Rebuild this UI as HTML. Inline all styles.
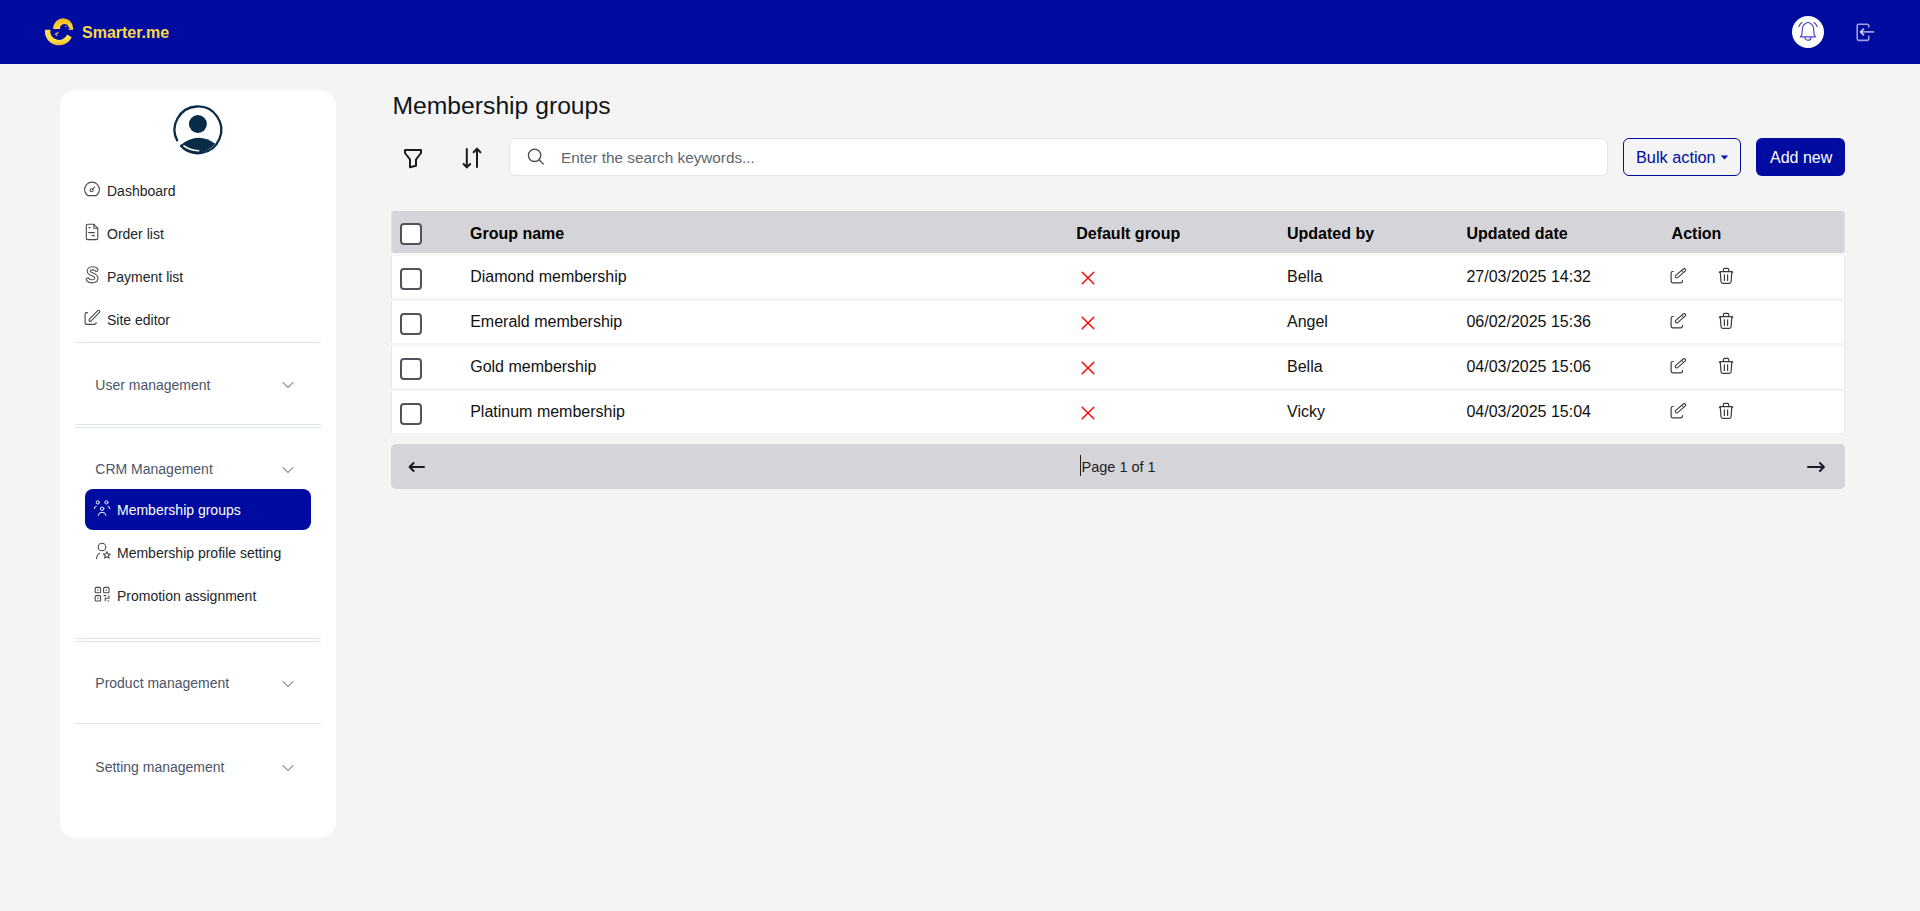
<!DOCTYPE html>
<html>
<head>
<meta charset="utf-8">
<style>
*{box-sizing:border-box;margin:0;padding:0}
html,body{width:1920px;height:911px;overflow:hidden;background:#f4f4f4;font-family:"Liberation Sans",sans-serif;color:#111}
.a{position:absolute}
.t{position:absolute;line-height:1;white-space:nowrap}
svg{position:absolute;overflow:visible}
#hdr{left:0;top:0;width:1920px;height:64px;background:#000c9f}
#side{left:60px;top:90px;width:276px;height:748px;background:#fff;border-radius:16px}
.s14{font-size:14px}
.s16{font-size:16px}
.nav{color:#212529}
.sec{color:#4a5568}
.hr{position:absolute;left:75px;width:246px;height:1px;background:#dde4ee}
.row{position:absolute;left:391px;width:1454px;height:42px;background:#fff;border-left:1px solid #e3e7ec;border-right:1px solid #e3e7ec}
.cb{position:absolute;left:400px;width:22px;height:22px;border:2.5px solid #505359;border-radius:4px;background:#fff}
.th{font-weight:bold;font-size:16px;color:#000}
.td{font-size:16px;color:#111}
</style>
</head>
<body>
<div id="hdr" class="a"></div>
<div id="side" class="a"></div>

<!-- header text -->
<div class="t" style="left:82px;top:24.5px;font-size:16px;font-weight:bold;color:#fcd947">Smarter.me</div>

<!-- sidebar -->
<div class="t s14 nav" style="left:107px;top:184px">Dashboard</div>
<div class="t s14 nav" style="left:107px;top:227px">Order list</div>
<div class="t s14 nav" style="left:107px;top:270px">Payment list</div>
<div class="t s14 nav" style="left:107px;top:312.8px">Site editor</div>
<div class="hr" style="top:342px"></div>
<div class="t s14 sec" style="left:95.3px;top:377.5px">User management</div>
<div class="hr" style="top:424px"></div>
<div class="hr" style="top:427px"></div>
<div class="t s14 sec" style="left:95.3px;top:462px">CRM Management</div>
<div class="a" style="left:85px;top:489px;width:226px;height:41px;background:#000c9f;border-radius:8px"></div>
<div class="t s14" style="left:117px;top:502.8px;color:#fff">Membership groups</div>
<div class="t s14 nav" style="left:117px;top:545.8px">Membership profile setting</div>
<div class="t s14 nav" style="left:117px;top:588.8px">Promotion assignment</div>
<div class="hr" style="top:638px"></div>
<div class="hr" style="top:641px"></div>
<div class="t s14 sec" style="left:95.3px;top:676px">Product management</div>
<div class="hr" style="top:723px"></div>
<div class="t s14 sec" style="left:95.3px;top:760px">Setting management</div>

<!-- main -->
<div class="t" style="left:392.5px;top:94.2px;font-size:24.7px;color:#111418">Membership groups</div>
<div class="a" style="left:509px;top:138px;width:1099px;height:38px;background:#fff;border:1px solid #dfe3ea;border-radius:6px"></div>
<div class="t" style="left:561px;top:150px;font-size:15.3px;color:#60666d">Enter the search keywords...</div>
<div class="a" style="left:1623px;top:138px;width:118px;height:38px;border:1px solid #000c9f;border-radius:6px"></div>
<div class="t s16" style="left:1636px;top:149.3px;font-size:16.3px;color:#000c9f">Bulk action</div>
<div class="a" style="left:1756px;top:138px;width:89px;height:38px;background:#000c9f;border-radius:6px"></div>
<div class="t s16" style="left:1770px;top:149.5px;color:#fff">Add new</div>

<!-- table header -->
<div class="a" style="left:391px;top:210.5px;width:1454px;height:42.5px;background:#d5d4d9;border-left:1px solid #dde2e8;border-right:1px solid #dde2e8;border-radius:3px"></div>
<div class="a" style="left:391px;top:253px;width:1454px;height:3px;background:#f7f7f7"></div>
<div class="cb" style="top:223px"></div>
<div class="t th" style="left:470px;top:225.7px">Group name</div>
<div class="t th" style="left:1076.2px;top:225.7px">Default group</div>
<div class="t th" style="left:1287px;top:225.7px">Updated by</div>
<div class="t th" style="left:1466.4px;top:225.7px">Updated date</div>
<div class="t th" style="left:1671.6px;top:225.7px">Action</div>

<!-- rows -->
<div class="row" style="top:256px"></div>
<div class="row" style="top:301px"></div>
<div class="row" style="top:346px"></div>
<div class="row" style="top:391px"></div>
<div class="cb" style="top:268px"></div>
<div class="cb" style="top:313px"></div>
<div class="cb" style="top:358px"></div>
<div class="cb" style="top:403px"></div>
<div class="t td" style="left:470.2px;top:269.4px">Diamond membership</div>
<div class="t td" style="left:470.2px;top:314.4px">Emerald membership</div>
<div class="t td" style="left:470.2px;top:359.4px">Gold membership</div>
<div class="t td" style="left:470.2px;top:404.4px">Platinum membership</div>
<div class="t td" style="left:1287px;top:269.4px">Bella</div>
<div class="t td" style="left:1287px;top:314.4px">Angel</div>
<div class="t td" style="left:1287px;top:359.4px">Bella</div>
<div class="t td" style="left:1287px;top:404.4px">Vicky</div>
<div class="t td" style="left:1466.4px;top:269.4px">27/03/2025 14:32</div>
<div class="t td" style="left:1466.4px;top:314.4px">06/02/2025 15:36</div>
<div class="t td" style="left:1466.4px;top:359.4px">04/03/2025 15:06</div>
<div class="t td" style="left:1466.4px;top:404.4px">04/03/2025 15:04</div>

<!-- pagination -->
<div class="a" style="left:391px;top:444px;width:1454px;height:45px;background:#d5d4d9;border-radius:5px"></div>
<div class="t" style="left:1081.5px;top:459.6px;font-size:14.5px;color:#222">Page 1 of 1</div>


<!-- ===== ICONS ===== -->
<!-- logo -->
<svg style="left:40px;top:14px" width="36" height="34" viewBox="40 14 36 34">
<defs>
<linearGradient id="lg1" gradientUnits="userSpaceOnUse" x1="0" y1="17.5" x2="0" y2="45.5">
<stop offset="0" stop-color="#f8b212"/><stop offset="0.42" stop-color="#ffdc48"/><stop offset="0.8" stop-color="#ffde49"/><stop offset="1" stop-color="#f7bd2a"/>
</linearGradient>
</defs>
<path d="M53.14 28.9 A10 10.6 0 0 1 73.1 27.9 L73.1 29.8 L68.4 29.8 L68.7 29.1 L70.2 28.1 L68.6 27.2 A4.35 4.35 0 0 0 64.3 23.95 A4.35 4.35 0 0 0 60.05 28.9 Z" fill="url(#lg1)"/>
<path d="M65.1 26.2 L66.6 26.6" stroke="#ffd84a" stroke-width="0.8" fill="none"/>
<path d="M44.95 29.79 A14.13 14.13 0 0 0 71.77 37.28 L67.12 34.5 A8.75 8.75 0 0 1 50.38 29.79 Z" fill="url(#lg1)"/>
<path d="M58.2 32.6 Q55.2 33.2 55.4 34.4 Q55.8 35.6 57 35.7 M55.9 34.1 L57.6 33.7" stroke="#ffd84a" stroke-width="0.9" fill="none" stroke-linecap="round"/>
</svg>

<!-- bell -->
<div class="a" style="left:1792px;top:16px;width:32px;height:32px;border-radius:50%;background:#fff"></div>
<svg style="left:1792px;top:16px" width="32" height="32" viewBox="0 0 32 32" fill="none" stroke="#5049c4" stroke-width="1.2" stroke-linecap="round" stroke-linejoin="round">
<path d="M16 6.3 C13.2 7.4 10.9 9 10.5 11.8 L9.8 19.2 L8.3 20.8 L23.7 20.8 L22.2 19.2 L21.5 11.8 C21.1 9 18.8 7.4 16 6.3 Z"/>
<path d="M12.9 21.2 A3.05 3.05 0 0 0 19 21.2"/>
<path d="M6.9 10.6 Q7.7 8.2 9.9 6.6"/>
<path d="M25.1 10.6 Q24.3 8.2 22.1 6.6"/>
</svg>
<!-- logout -->
<svg style="left:1853.7px;top:20.7px" width="22" height="22" viewBox="0 0 22 22" fill="none" stroke-linecap="round" stroke-linejoin="round">
<path d="M14.8 6 L14.8 4.8 Q14.8 3.2 13.2 3.2 L4.5 3.2 Q3.2 3.2 3.2 4.8 L3.2 17.8 Q3.2 19.4 4.8 19.4 L13.2 19.4 Q14.8 19.4 14.8 17.8 L14.8 15.4" stroke="#a39ce6" stroke-width="1.6"/>
<path d="M7 10.9 L19.6 10.9" stroke="#a39ce6" stroke-width="1.6"/>
<path d="M9.6 8 L6.6 10.9 L9.6 13.8" stroke="#d9d6f7" stroke-width="1.6"/>
</svg>

<!-- avatar -->
<svg style="left:173px;top:105px" width="50" height="50" viewBox="0 0 50 50">
<path d="M4.52 36.19 A23.35 23.35 0 1 1 7.38 40.24" fill="none" stroke="#082c48" stroke-width="2.3"/>
<circle cx="24.9" cy="19" r="9" fill="#082c48"/>
<path d="M6.9 40.5 Q24.6 25.8 42.3 38.7 A23.9 23.9 0 0 1 6.9 40.5 Z" fill="#082c48"/>
<path d="M10.9 40.9 Q16.2 45.2 25.7 45.7" fill="none" stroke="#fff" stroke-width="1.6" stroke-linecap="round"/>
</svg>

<!-- sidebar icons -->
<svg style="left:84px;top:181px" width="17" height="16" viewBox="0 0 17 16" fill="none" stroke="#4a4a4a" stroke-width="1.1" stroke-linecap="round">
<path d="M4.3 14.6 Q3.6 14.6 3 14 A7.4 7.4 0 1 1 13 14 Q12.4 14.6 11.7 14.6 Z"/>
<circle cx="7.6" cy="9.2" r="1.5"/>
<path d="M8.7 8.1 L10.6 6.2"/>
</svg>
<svg style="left:85px;top:223px" width="15" height="18" viewBox="0 0 15 18" fill="none" stroke="#4a4a4a" stroke-width="1.1" stroke-linejoin="round" stroke-linecap="round">
<path d="M1.3 2.7 Q1.3 1.3 2.7 1.3 L8.9 1.3 L12.8 5.2 L12.8 15.3 Q12.8 16.6 11.4 16.6 L2.7 16.6 Q1.3 16.6 1.3 15.3 Z"/>
<path d="M8.9 1.3 L8.9 5.2 L12.8 5.2"/>
<path d="M3.9 4.6 L5.2 4.6 M3.6 9.6 L9.4 9.6 M7 12.6 L9.4 12.6"/>
</svg>
<svg style="left:84px;top:265px" width="17" height="20" viewBox="0 0 17 20" fill="none" stroke-linecap="round" stroke-linejoin="round">
<path d="M12.4 4.9 C11.4 2.9 5.2 2.4 4.7 6.1 C4.3 9.3 12.3 9 12.4 13.1 C12.5 17 5.6 17.1 3.8 14.5" stroke="#555" stroke-width="4.2"/>
<path d="M12.4 4.9 C11.4 2.9 5.2 2.4 4.7 6.1 C4.3 9.3 12.3 9 12.4 13.1 C12.5 17 5.6 17.1 3.8 14.5" stroke="#fff" stroke-width="2"/>
</svg>
<svg style="left:84px;top:308px" width="18" height="18" viewBox="0 0 18 18" fill="none" stroke-linecap="round" stroke-linejoin="round">
<path d="M3.6 4.6 L2.6 4.6 Q1.1 4.6 1.1 6.1 L1.1 15 Q1.1 16.4 2.5 16.4 L10.6 16.4 Q12.2 16.4 12.2 14.6" stroke="#4a4a4a" stroke-width="1.15"/>
<path d="M6.3 12.1 L14.6 3.6" stroke="#4a4a4a" stroke-width="3.6"/>
<path d="M6.3 12.1 L14.6 3.6" stroke="#fff" stroke-width="1.4"/>
</svg>
<svg style="left:92px;top:498px" width="20" height="20" viewBox="0 0 20 20" fill="none" stroke="#fff" stroke-width="1" stroke-linecap="round">
<circle cx="5.8" cy="4.4" r="1.6"/><circle cx="14.4" cy="4.4" r="1.6"/><circle cx="10.1" cy="10.8" r="1.7"/>
<path d="M2.3 10.6 Q2.3 8.6 4.2 8.3 M17.9 10.6 Q17.9 8.6 16 8.3"/>
<path d="M6.2 17.4 Q6.4 14.3 10.1 14.3 Q13.8 14.3 14 17.4"/>
</svg>
<svg style="left:94px;top:541px" width="19" height="21" viewBox="0 0 19 21" fill="none" stroke="#4a4a4a" stroke-width="1.1" stroke-linecap="round" stroke-linejoin="round">
<circle cx="8" cy="6" r="3.8"/>
<path d="M2.6 17.6 Q3 13.6 5.6 12.6"/>
<path d="M12.8 10.6 L13.9 12.9 L16.3 13.1 L14.5 14.7 L15.1 17.1 L12.8 15.8 L10.6 17.1 L11.2 14.7 L9.4 13.1 L11.8 12.9 Z"/>
</svg>
<svg style="left:94px;top:586px" width="17" height="17" viewBox="0 0 17 17" fill="none" stroke="#4a4a4a" stroke-width="1.1" stroke-linejoin="round">
<rect x="1.2" y="1.4" width="5.4" height="5.4" rx="1"/><rect x="9.6" y="1.4" width="5.4" height="5.4" rx="1"/><rect x="1.2" y="9.6" width="5.4" height="5.4" rx="1"/>
<rect x="3.3" y="3.5" width="1.2" height="1.2" fill="#4a4a4a" stroke="none"/><rect x="11.7" y="3.5" width="1.2" height="1.2" fill="#4a4a4a" stroke="none"/><rect x="3.3" y="11.7" width="1.2" height="1.2" fill="#4a4a4a" stroke="none"/>
<path d="M9.6 9.6 L12.4 9.6 M15 9.6 L15 12.2 L11.2 12.2 L11.2 15 M13.4 15 L15.2 15"/>
</svg>

<!-- chevrons -->
<svg style="left:280px;top:378px" width="16" height="12" viewBox="0 0 16 12" fill="none" stroke="#6b7280" stroke-width="1.05" stroke-linecap="round" stroke-linejoin="round"><path d="M3 4.5 L8 9.5 L13 4.5"/></svg>
<svg style="left:280px;top:463px" width="16" height="12" viewBox="0 0 16 12" fill="none" stroke="#6b7280" stroke-width="1.05" stroke-linecap="round" stroke-linejoin="round"><path d="M3 4.5 L8 9.5 L13 4.5"/></svg>
<svg style="left:280px;top:677px" width="16" height="12" viewBox="0 0 16 12" fill="none" stroke="#6b7280" stroke-width="1.05" stroke-linecap="round" stroke-linejoin="round"><path d="M3 4.5 L8 9.5 L13 4.5"/></svg>
<svg style="left:280px;top:761px" width="16" height="12" viewBox="0 0 16 12" fill="none" stroke="#6b7280" stroke-width="1.05" stroke-linecap="round" stroke-linejoin="round"><path d="M3 4.5 L8 9.5 L13 4.5"/></svg>

<!-- filter / sort / search -->
<svg style="left:400px;top:145px" width="26" height="26" viewBox="400 145 26 26" fill="none" stroke="#1c1c1c" stroke-width="2" stroke-linejoin="round" stroke-linecap="round">
<path d="M405 150 L421 150 L421 153 L416 159.5 L416 165.8 L410 167.3 L410 159.5 L405 153 Z"/>
</svg>
<svg style="left:460px;top:145px" width="26" height="26" viewBox="460 145 26 26" fill="none" stroke="#1c1c1c" stroke-width="2" stroke-linejoin="round" stroke-linecap="round">
<path d="M466.8 149 L466.8 167 M463.6 164 L466.8 167.4 L470.2 164"/>
<path d="M477 167 L477 149 M473.6 152.2 L477 148.6 L480.4 152.2"/>
</svg>
<svg style="left:524px;top:145px" width="24" height="24" viewBox="524 145 24 24" fill="none" stroke="#4a4a4a" stroke-width="1.3" stroke-linecap="round">
<circle cx="534.6" cy="155.3" r="6.2"/><path d="M539.3 160 L543.4 164.1"/>
</svg>
<svg style="left:1718px;top:152px" width="14" height="10" viewBox="1718 152 14 10"><path d="M1720.8 155.4 L1728.2 155.4 L1724.5 159.6 Z" fill="#000c9f"/></svg>

<!-- pagination arrows + cursor -->
<svg style="left:404px;top:457px" width="26" height="20" viewBox="404 457 26 20" fill="none" stroke="#1a1b26" stroke-width="2" stroke-linecap="round" stroke-linejoin="round">
<path d="M410 467 L424 467 M413.6 463 L409.6 467 L413.6 471"/>
</svg>
<svg style="left:1802px;top:457px" width="26" height="20" viewBox="1802 457 26 20" fill="none" stroke="#1a1b26" stroke-width="2" stroke-linecap="round" stroke-linejoin="round">
<path d="M1808 467 L1823.5 467 M1819.9 463 L1823.9 467 L1819.9 471"/>
</svg>
<div class="a" style="left:1080px;top:455px;width:1px;height:21px;background:#222"></div>
<svg style="left:1078px;top:269px" width="20" height="18" viewBox="0 0 20 18" fill="none" stroke="#ff0000" stroke-width="1.4" stroke-linecap="round"><path d="M4.2 3.2 L15.8 14.8 M15.8 3.2 L4.2 14.8"/></svg>
<svg style="left:1668px;top:266px" width="22" height="20" viewBox="0 0 22 20" fill="none" stroke-linecap="round" stroke-linejoin="round">
<path d="M5.3 5.5 L4.9 5.5 Q3.1 5.5 3.1 7.3 L3.1 15.1 Q3.1 16.8 4.8 16.8 L12.6 16.8 Q14.4 16.8 14.5 14.7" stroke="#3a3a3a" stroke-width="1.2"/>
<path d="M8.7 10.5 L16.2 4.1" stroke="#3a3a3a" stroke-width="3.9"/>
<path d="M8.7 10.5 L16.2 4.1" stroke="#fff" stroke-width="1.7"/>
<path d="M13.5 4.3 L15.9 6.7" stroke="#3a3a3a" stroke-width="1"/>
</svg>
<svg style="left:1716px;top:266px" width="20" height="20" viewBox="0 0 20 20" fill="none" stroke="#3a3a3a" stroke-width="1.2" stroke-linecap="round" stroke-linejoin="round">
<path d="M7.4 5.6 L7.4 3.4 Q7.4 2.3 8.5 2.3 L11.6 2.3 Q12.7 2.3 12.7 3.4 L12.7 5.6"/>
<path d="M3.4 6.4 L3.8 5.7 L16.3 5.7 L16.7 6.4"/>
<path d="M4.3 6.4 L5 15.8 Q5.2 17.4 6.8 17.4 L13.3 17.4 Q14.9 17.4 15.1 15.8 L15.8 6.4"/>
<path d="M8.4 8.8 L8.4 14.4 M11.6 8.8 L11.6 14.4"/>
</svg>
<svg style="left:1078px;top:314px" width="20" height="18" viewBox="0 0 20 18" fill="none" stroke="#ff0000" stroke-width="1.4" stroke-linecap="round"><path d="M4.2 3.2 L15.8 14.8 M15.8 3.2 L4.2 14.8"/></svg>
<svg style="left:1668px;top:311px" width="22" height="20" viewBox="0 0 22 20" fill="none" stroke-linecap="round" stroke-linejoin="round">
<path d="M5.3 5.5 L4.9 5.5 Q3.1 5.5 3.1 7.3 L3.1 15.1 Q3.1 16.8 4.8 16.8 L12.6 16.8 Q14.4 16.8 14.5 14.7" stroke="#3a3a3a" stroke-width="1.2"/>
<path d="M8.7 10.5 L16.2 4.1" stroke="#3a3a3a" stroke-width="3.9"/>
<path d="M8.7 10.5 L16.2 4.1" stroke="#fff" stroke-width="1.7"/>
<path d="M13.5 4.3 L15.9 6.7" stroke="#3a3a3a" stroke-width="1"/>
</svg>
<svg style="left:1716px;top:311px" width="20" height="20" viewBox="0 0 20 20" fill="none" stroke="#3a3a3a" stroke-width="1.2" stroke-linecap="round" stroke-linejoin="round">
<path d="M7.4 5.6 L7.4 3.4 Q7.4 2.3 8.5 2.3 L11.6 2.3 Q12.7 2.3 12.7 3.4 L12.7 5.6"/>
<path d="M3.4 6.4 L3.8 5.7 L16.3 5.7 L16.7 6.4"/>
<path d="M4.3 6.4 L5 15.8 Q5.2 17.4 6.8 17.4 L13.3 17.4 Q14.9 17.4 15.1 15.8 L15.8 6.4"/>
<path d="M8.4 8.8 L8.4 14.4 M11.6 8.8 L11.6 14.4"/>
</svg>
<svg style="left:1078px;top:359px" width="20" height="18" viewBox="0 0 20 18" fill="none" stroke="#ff0000" stroke-width="1.4" stroke-linecap="round"><path d="M4.2 3.2 L15.8 14.8 M15.8 3.2 L4.2 14.8"/></svg>
<svg style="left:1668px;top:356px" width="22" height="20" viewBox="0 0 22 20" fill="none" stroke-linecap="round" stroke-linejoin="round">
<path d="M5.3 5.5 L4.9 5.5 Q3.1 5.5 3.1 7.3 L3.1 15.1 Q3.1 16.8 4.8 16.8 L12.6 16.8 Q14.4 16.8 14.5 14.7" stroke="#3a3a3a" stroke-width="1.2"/>
<path d="M8.7 10.5 L16.2 4.1" stroke="#3a3a3a" stroke-width="3.9"/>
<path d="M8.7 10.5 L16.2 4.1" stroke="#fff" stroke-width="1.7"/>
<path d="M13.5 4.3 L15.9 6.7" stroke="#3a3a3a" stroke-width="1"/>
</svg>
<svg style="left:1716px;top:356px" width="20" height="20" viewBox="0 0 20 20" fill="none" stroke="#3a3a3a" stroke-width="1.2" stroke-linecap="round" stroke-linejoin="round">
<path d="M7.4 5.6 L7.4 3.4 Q7.4 2.3 8.5 2.3 L11.6 2.3 Q12.7 2.3 12.7 3.4 L12.7 5.6"/>
<path d="M3.4 6.4 L3.8 5.7 L16.3 5.7 L16.7 6.4"/>
<path d="M4.3 6.4 L5 15.8 Q5.2 17.4 6.8 17.4 L13.3 17.4 Q14.9 17.4 15.1 15.8 L15.8 6.4"/>
<path d="M8.4 8.8 L8.4 14.4 M11.6 8.8 L11.6 14.4"/>
</svg>
<svg style="left:1078px;top:404px" width="20" height="18" viewBox="0 0 20 18" fill="none" stroke="#ff0000" stroke-width="1.4" stroke-linecap="round"><path d="M4.2 3.2 L15.8 14.8 M15.8 3.2 L4.2 14.8"/></svg>
<svg style="left:1668px;top:401px" width="22" height="20" viewBox="0 0 22 20" fill="none" stroke-linecap="round" stroke-linejoin="round">
<path d="M5.3 5.5 L4.9 5.5 Q3.1 5.5 3.1 7.3 L3.1 15.1 Q3.1 16.8 4.8 16.8 L12.6 16.8 Q14.4 16.8 14.5 14.7" stroke="#3a3a3a" stroke-width="1.2"/>
<path d="M8.7 10.5 L16.2 4.1" stroke="#3a3a3a" stroke-width="3.9"/>
<path d="M8.7 10.5 L16.2 4.1" stroke="#fff" stroke-width="1.7"/>
<path d="M13.5 4.3 L15.9 6.7" stroke="#3a3a3a" stroke-width="1"/>
</svg>
<svg style="left:1716px;top:401px" width="20" height="20" viewBox="0 0 20 20" fill="none" stroke="#3a3a3a" stroke-width="1.2" stroke-linecap="round" stroke-linejoin="round">
<path d="M7.4 5.6 L7.4 3.4 Q7.4 2.3 8.5 2.3 L11.6 2.3 Q12.7 2.3 12.7 3.4 L12.7 5.6"/>
<path d="M3.4 6.4 L3.8 5.7 L16.3 5.7 L16.7 6.4"/>
<path d="M4.3 6.4 L5 15.8 Q5.2 17.4 6.8 17.4 L13.3 17.4 Q14.9 17.4 15.1 15.8 L15.8 6.4"/>
<path d="M8.4 8.8 L8.4 14.4 M11.6 8.8 L11.6 14.4"/>
</svg>

</body>
</html>
